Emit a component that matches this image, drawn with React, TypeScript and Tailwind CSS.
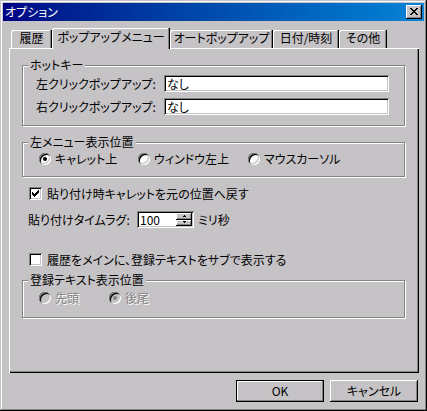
// Options dialog (Win98-style, 16-bit palette): popup-menu tab with hotkeys,
// menu position radios, paste options and a disabled registered-text group.

import type { ReactNode } from 'react'

const RAISED =
  'shadow-[inset_-1px_-1px_0_#000,inset_1px_1px_0_#fff,inset_-2px_-2px_0_#848284]'
const SUNKEN =
  'shadow-[inset_1px_1px_0_#848284,inset_-1px_-1px_0_#fff,inset_2px_2px_0_#000,inset_-2px_-2px_0_#c6c3c6]'
const DISABLED_TEXT = 'text-[#848284] [text-shadow:1px_1px_0_#fff]'

function CloseButton() {
  return (
    <div className={`flex h-[14px] w-[16px] items-center justify-center bg-[#c6c3c6] ${RAISED}`}>
      <svg width="8" height="7" viewBox="0 0 8 7" shapeRendering="crispEdges" className="-mt-px">
        <path d="M0 0h2v1H0zM6 0h2v1H6zM1 1h2v1H1zM5 1h2v1H5zM2 2h4v1H2zM3 3h2v1H3zM2 4h4v1H2zM1 5h2v1H1zM5 5h2v1H5zM0 6h2v1H0zM6 6h2v1H6z" fill="#000" />
      </svg>
    </div>
  )
}

const TABS = [
  { label: '履歴', w: 'w-[41px]' },
  { label: 'ポップアップメニュー', w: 'w-[118px]', active: true },
  { label: 'オートポップアップ', w: 'w-[103px]' },
  { label: '日付/時刻', w: 'w-[66px]' },
  { label: 'その他', w: 'w-[48px]' }
]

function TabStrip() {
  return (
    <div className="relative z-10 ml-[8px] mt-[7px] flex h-[20px] items-end">
      {TABS.map((t) =>
        t.active ? (
          <div
            key={t.label}
            className={`${t.w} -mb-px h-[21px] rounded-tl-[2px] bg-[#c6c3c6] pt-[2px] text-center shadow-[inset_-1px_0_0_#000,inset_-2px_0_0_#848284,inset_1px_1px_0_#fff]`}
          >
            {t.label}
          </div>
        ) : (
          <div
            key={t.label}
            className={`${t.w} h-[18px] rounded-tl-[2px] pt-[1px] text-center shadow-[inset_-1px_0_0_#000,inset_-2px_0_0_#848284,inset_1px_1px_0_#fff]`}
          >
            {t.label}
          </div>
        )
      )}
    </div>
  )
}

function GroupBox({
  label,
  className,
  children
}: {
  label: string
  className?: string
  children: ReactNode
}) {
  return (
    <fieldset
      className={`border border-[#848284] shadow-[1px_1px_0_#fff,inset_1px_1px_0_#fff] ${className ?? ''}`}
    >
      <legend className="ml-[5px] bg-[#c6c3c6] px-[2px] leading-[14px]">{label}</legend>
      {children}
    </fieldset>
  )
}

function EditRow({ label, value }: { label: string; value: string }) {
  return (
    <div className="flex h-[17px] items-center">
      <span className="w-[141px] pl-[13px]">{label}</span>
      <div className={`flex h-[17px] w-[225px] items-center bg-white pl-[3px] ${SUNKEN}`}>{value}</div>
    </div>
  )
}

function Radio({
  label,
  checked,
  disabled,
  className
}: {
  label: string
  checked?: boolean
  disabled?: boolean
  className?: string
}) {
  return (
    <div className={`flex h-[14px] items-center ${className ?? ''}`}>
      <span
        className={`flex h-[12px] w-[12px] items-center justify-center rounded-full ${
          disabled ? 'bg-[#c6c3c6]' : 'bg-white'
        } ${SUNKEN}`}
      >
        {checked && (
          <span className={`h-[4px] w-[4px] rounded-full ${disabled ? 'bg-[#848284]' : 'bg-black'}`} />
        )}
      </span>
      <span className={`ml-[4px] ${disabled ? DISABLED_TEXT : ''}`}>{label}</span>
    </div>
  )
}

function CheckBox({ label, checked, className }: { label: string; checked?: boolean; className?: string }) {
  return (
    <div className={`ml-[7px] flex h-[13px] items-center ${className ?? ''}`}>
      <span className={`flex h-[13px] w-[13px] items-center justify-center bg-white ${SUNKEN}`}>
        {checked && (
          <svg width="7" height="7" viewBox="0 0 7 7" shapeRendering="crispEdges">
            <path d="M6 0h1v3H6zM5 1h1v3H5zM4 2h1v3H4zM3 3h1v3H3zM2 4h1v3H2zM1 3h1v3H1zM0 2h1v3H0z" fill="#000" />
          </svg>
        )}
      </span>
      <span className="ml-[5px]">{label}</span>
    </div>
  )
}

function SpinEdit({ value }: { value: string }) {
  return (
    <div className={`flex h-[17px] w-[57px] bg-white p-[2px] ${SUNKEN}`}>
      <span className="flex flex-1 items-center pl-[1px]">{value}</span>
      <div className="flex w-[16px] flex-col">
        <div className={`flex flex-1 items-center justify-center bg-[#c6c3c6] ${RAISED}`}>
          <svg width="5" height="3" viewBox="0 0 5 3" shapeRendering="crispEdges">
            <path d="M2 0h1v1H2zM1 1h3v1H1z" fill="#000" />
          </svg>
        </div>
        <div className={`flex flex-1 items-center justify-center bg-[#c6c3c6] ${RAISED}`}>
          <svg width="5" height="3" viewBox="0 0 5 3" shapeRendering="crispEdges">
            <path d="M1 0h3v1H1zM2 1h1v1H2z" fill="#000" />
          </svg>
        </div>
      </div>
    </div>
  )
}

export default function App() {
  return (
    <div className="flex h-[411px] w-[427px] flex-col bg-[#c6c3c6] p-[3px] font-['Noto_Sans_CJK_JP',sans-serif] text-[12px] leading-[14px] text-black shadow-[inset_-1px_-1px_0_#000,inset_1px_1px_0_#c6c3c6,inset_-2px_-2px_0_#848284,inset_2px_2px_0_#fff] [font-feature-settings:'palt']">
      <div className="flex h-[18px] items-center justify-between bg-linear-to-r from-[#000084] to-[#1084d6] pl-[2px] pr-[2px]">
        <span className="text-white">オプション</span>
        <CloseButton />
      </div>

      <TabStrip />

      <div className="ml-[6px] h-[325px] w-[410px] pl-[13px] pr-[14px] pt-[10px] shadow-[inset_1px_1px_0_#fff,inset_-1px_-1px_0_#000,inset_-2px_-2px_0_#848284]">
        <GroupBox label="ホットキー" className="pb-[10px] pt-[3px]">
          <div className="flex flex-col gap-[6px]">
            <EditRow label="左クリックポップアップ:" value="なし" />
            <EditRow label="右クリックポップアップ:" value="なし" />
          </div>
        </GroupBox>

        <GroupBox label="左メニュー表示位置" className="mt-[9px] pb-[10px] pt-[3px]">
          <div className="flex pl-[16px]">
            <Radio label="キャレット上" checked className="w-[99px]" />
            <Radio label="ウィンドウ左上" className="w-[110px]" />
            <Radio label="マウスカーソル" />
          </div>
        </GroupBox>

        <CheckBox label="貼り付け時キャレットを元の位置へ戻す" checked className="mt-[10px]" />

        <div className="ml-[6px] mt-[11px] flex h-[17px] items-center">
          <span className="w-[109px]">貼り付けタイムラグ:</span>
          <SpinEdit value="100" />
          <span className="ml-[4px]">ミリ秒</span>
        </div>

        <CheckBox label="履歴をメインに、登録テキストをサブで表示する" className="mt-[25px]" />

        <GroupBox label="登録テキスト表示位置" className="mt-[7px] pb-[12px] pt-[4px]">
          <div className="flex pl-[16px]">
            <Radio label="先頭" disabled className="w-[70px]" />
            <Radio label="後尾" checked disabled />
          </div>
        </GroupBox>
      </div>

      <div className="mr-[6px] mt-[7px] flex justify-end gap-[6px]">
        <button
          type="button"
          className="flex h-[22px] w-[88px] items-center justify-center border border-black bg-[#c6c3c6] shadow-[inset_-1px_-1px_0_#848284,inset_1px_1px_0_#fff]"
        >
          OK
        </button>
        <button
          type="button"
          className={`flex h-[22px] w-[88px] items-center justify-center bg-[#c6c3c6] ${RAISED}`}
        >
          キャンセル
        </button>
      </div>
    </div>
  )
}
